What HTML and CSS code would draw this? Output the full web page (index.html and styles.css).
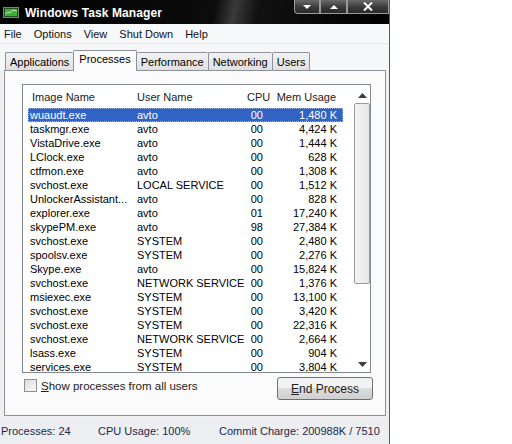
FILE: index.html
```html
<!DOCTYPE html>
<html lang="en">
<head>
  <meta charset="UTF-8" />
  <title>Windows Task Manager</title>
  <link rel="stylesheet" href="styles.css">
</head>
<body>

  <div class="window">
    <!-- Title bar -->
    <div class="titlebar">
      <svg class="app-icon" width="16" height="12" viewBox="0 0 16 12">
        <rect x="0.5" y="0.5" width="15" height="10" fill="#1f4f1f" stroke="#6c8c6c"/>
        <rect x="2" y="2" width="12" height="7" fill="#3fae3f"/>
        <polyline points="2,7 5,5 7,6 10,3 14,4" fill="none" stroke="#b8f0a0" stroke-width="1"/>
      </svg>
      <span class="title">Windows Task Manager</span>
      <div class="controls">
        <div class="ctl ctl-min"><svg width="10" height="6" viewBox="0 0 10 6"><polygon points="1,1 9,1 5,5" fill="#fff"/></svg></div>
        <div class="ctl ctl-max"><svg width="10" height="6" viewBox="0 0 10 6"><polygon points="1,5 9,5 5,1" fill="#fff"/></svg></div>
        <div class="ctl ctl-close"><svg width="10" height="9" viewBox="0 0 10 9"><path d="M1 0.5 L9 8.5 M9 0.5 L1 8.5" stroke="#fff" stroke-width="2"/></svg></div>
      </div>
    </div>

    <!-- Menu -->
    <div class="menubar">
      <span>File</span>
      <span>Options</span>
      <span>View</span>
      <span>Shut Down</span>
      <span>Help</span>
    </div>

    <!-- Tabs -->
    <div class="tabs">
      <div class="tab">Applications</div>
      <div class="tab active">Processes</div>
      <div class="tab">Performance</div>
      <div class="tab">Networking</div>
      <div class="tab">Users</div>
    </div>

    <div class="panel">
      <div class="listbox">
        <div class="list">
          <div class="row head">
            <span class="c-name">Image Name</span>
            <span class="c-user">User Name</span>
            <span class="c-cpu">CPU</span>
            <span class="c-mem">Mem Usage</span>
          </div>
          <div class="rows" id="rows"></div>
        </div>
        <div class="scrollbar">
          <svg class="arrow" width="9" height="6" viewBox="0 0 9 6"><polygon points="0,5 9,5 4.5,0" fill="#3c3c3c"/></svg>
          <div class="track"><div class="thumb"></div></div>
          <svg class="arrow" width="9" height="6" viewBox="0 0 9 6"><polygon points="0,0 9,0 4.5,5" fill="#3c3c3c"/></svg>
        </div>
      </div>

      <div class="bottom">
        <label class="check"><span class="box"></span><span><u>S</u>how processes from all users</span></label>
        <button class="btn"><u>E</u>nd Process</button>
      </div>
    </div>

    <div class="statusbar">
      <span class="s1">Processes: 24</span>
      <span class="s2">CPU Usage: 100%</span>
      <span class="s3">Commit Charge: 200988K / 7510</span>
    </div>
  </div>

  <script src="script.js"></script>
</body>
</html>
```

FILE: script.js
```js
const processes = [
  ['wuaudt.exe', 'avto', '00', '1,480 K'],
  ['taskmgr.exe', 'avto', '00', '4,424 K'],
  ['VistaDrive.exe', 'avto', '00', '1,444 K'],
  ['LClock.exe', 'avto', '00', '628 K'],
  ['ctfmon.exe', 'avto', '00', '1,308 K'],
  ['svchost.exe', 'LOCAL SERVICE', '00', '1,512 K'],
  ['UnlockerAssistant...', 'avto', '00', '828 K'],
  ['explorer.exe', 'avto', '01', '17,240 K'],
  ['skypePM.exe', 'avto', '98', '27,384 K'],
  ['svchost.exe', 'SYSTEM', '00', '2,480 K'],
  ['spoolsv.exe', 'SYSTEM', '00', '2,276 K'],
  ['Skype.exe', 'avto', '00', '15,824 K'],
  ['svchost.exe', 'NETWORK SERVICE', '00', '1,376 K'],
  ['msiexec.exe', 'SYSTEM', '00', '13,100 K'],
  ['svchost.exe', 'SYSTEM', '00', '3,420 K'],
  ['svchost.exe', 'SYSTEM', '00', '22,316 K'],
  ['svchost.exe', 'NETWORK SERVICE', '00', '2,664 K'],
  ['lsass.exe', 'SYSTEM', '00', '904 K'],
  ['services.exe', 'SYSTEM', '00', '3,804 K']
];

const rows = document.getElementById('rows');
processes.forEach((p, i) => {
  const row = document.createElement('div');
  row.className = 'row' + (i === 0 ? ' selected' : '');
  row.innerHTML =
    '<span class="c-name">' + p[0] + '</span>' +
    '<span class="c-user">' + p[1] + '</span>' +
    '<span class="c-cpu">' + p[2] + '</span>' +
    '<span class="c-mem">' + p[3] + '</span>';
  rows.appendChild(row);
});
```

FILE: styles.css
```css
body { margin: 0; background: #fff; font-family: "Liberation Sans", Arial, sans-serif; font-size: 11px; color: #000; }
.window { width: 389px; height: 444px; display: flex; flex-direction: column; background: #f0f0f0; border-right: 1px solid #5a5a5a; overflow: hidden; }

.titlebar { height: 24px; display: flex; align-items: center; background: linear-gradient(100deg, #000 0%, #0c0c0c 55%, #3a3a3a 60%, #111 66%, #000 100%); position: relative; }
.app-icon { margin: 2px 6px 0 3px; }
.title { color: #fff; font-weight: bold; font-size: 12px; margin-top: 2px; letter-spacing: 0.1px; }
.controls { position: absolute; top: 0; right: 0; display: flex; }
.ctl { height: 13px; display: flex; align-items: center; justify-content: center; background: linear-gradient(#6a6a6a, #3a3a3a 55%, #2a2a2a); border: 1px solid #9a9a9a; border-top: none; }
.ctl-min { width: 24px; border-radius: 0 0 0 4px; }
.ctl-max { width: 25px; border-left: 1px solid #999; }
.ctl-close { width: 40px; border-left: 1px solid #999; }

.menubar { height: 19px; display: flex; align-items: center; background: #f7f8fa; border-bottom: 1px solid #e3e5e8; font-size: 11px; padding-left: 4px; gap: 12px; }
.menubar span { color: #111; }

.tabs { display: flex; align-items: flex-end; height: 26px; padding-left: 5px; background: #f6f7f8; }
.tab { height: 17px; padding: 0 4px; display: flex; align-items: center; font-size: 11px; border: 1px solid #8e9199; border-bottom: none; border-right: none; background: linear-gradient(#f3f3f3, #e0e0e0); border-radius: 2px 2px 0 0; }
.tab:last-child { border-right: 1px solid #8e9199; }
.tab.active { height: 21px; background: #fbfbfb; border-right: 1px solid #8e9199; margin-bottom: -1px; position: relative; z-index: 1; padding: 2px 5px 0; align-items: flex-start; box-sizing: border-box; }
.tab.active + .tab { border-left: none; }

.panel { flex: 1; margin: 0 3px 0 4px; border: 1px solid #8e9199; background: #fbfbfb; padding: 13px 14px 0 17px; display: flex; flex-direction: column; }

.listbox { height: 287px; border: 1px solid #828790; background: #fff; display: flex; overflow: hidden; }
.list { flex: 1; padding-left: 5px; overflow: hidden; }
.row { display: flex; height: 14px; line-height: 14px; }
.row.head { height: 23px; line-height: 24px; color: #222; }
.row.head .c-name { padding-left: 4px; width: 105px; }
.row span { white-space: nowrap; }
.c-name { width: 107px; padding-left: 2px; }
.c-user { width: 110px; }
.c-cpu { width: 16px; text-align: right; }
.c-mem { width: 74px; text-align: right; }
.row.head .c-cpu { width: 20px; }
.row.head .c-mem { width: 69px; }
.row.selected { background: #3163c5; color: #fff; width: 315px; outline: 1px dotted #9bb3e2; outline-offset: -1px; }

.scrollbar { width: 16px; margin-left: 10px; display: flex; flex-direction: column; align-items: center; padding: 8px 0 4px; }
.arrow { flex: none; }
.track { flex: 1; width: 100%; padding: 4px 0; }
.thumb { height: 181px; border: 1px solid #9a9a9a; border-radius: 2px; background: linear-gradient(90deg, #f4f4f4, #e6e6e6); box-sizing: border-box; }

.bottom { display: flex; justify-content: space-between; align-items: flex-start; padding-top: 4px; }
.check { display: flex; align-items: center; gap: 4px; margin-left: 2px; margin-top: 2px; font-size: 11.5px; color: #222; }
.box { width: 11px; height: 11px; border: 1px solid #8f8f8f; background: linear-gradient(135deg, #dcdcdc, #fafafa); }
.btn { width: 96px; height: 23px; font-family: "Liberation Sans", Arial, sans-serif; font-size: 12px; color: #222; border: 1px solid #707070; border-radius: 3px; background: linear-gradient(#f2f2f2 50%, #dcdcdc 50%, #cfcfcf); padding: 0; margin-right: -2px; }

.statusbar { height: 27px; display: flex; align-items: center; background: #eceef2; font-size: 11px; color: #1a2a4a; margin-top: 1px; white-space: nowrap; }
.s1 { padding-left: 1px; width: 97px; }
.s2 { width: 121px; }
```
